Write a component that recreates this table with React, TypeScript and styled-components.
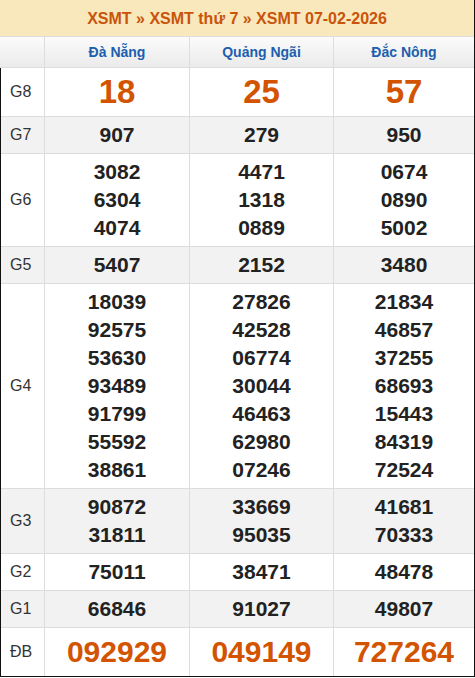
import styled, { createGlobalStyle } from 'styled-components';

const GlobalStyle = createGlobalStyle`
  body {
    margin: 0;
    background: #fff;
    font-family: 'Liberation Sans', Arial, sans-serif;
  }
`;

const Board = styled.div`
  width: 475px;
  box-sizing: border-box;
  border-right: 1px solid #111;
  border-bottom: 1px solid #111;
`;

const Title = styled.div`
  height: 36px;
  line-height: 37px;
  text-align: center;
  background: #f8e8bb;
  border-bottom: 1px solid #ddd;
  color: #c9540c;
  font-size: 16px;
  font-weight: 700;
`;

const HeadRow = styled.div`
  display: grid;
  grid-template-columns: 44px 145px 144px 141px;
  height: 30px;
  background: linear-gradient(#fbfbfb, #ebebeb);
  border-bottom: 1px solid #ddd;
`;

const HeadCell = styled.div`
  display: flex;
  align-items: center;
  justify-content: center;
  border-left: 1px solid #ddd;
  color: #1b5fae;
  font-size: 14px;
  font-weight: 700;

  &:first-child {
    border-left: none;
  }
`;

const Body = styled.div`
  border-left: 1px solid #111;
`;

const Row = styled.div<{ $shade: boolean; $last: boolean }>`
  display: grid;
  grid-template-columns: 43px 145px 144px 141px;
  background: ${(p) => (p.$shade ? '#f2f2f2' : '#fff')};
  border-bottom: ${(p) => (p.$last ? 'none' : '1px solid #ddd')};
`;

const Label = styled.div`
  display: flex;
  align-items: center;
  padding-left: 9px;
  color: #333;
  font-size: 16px;
`;

const Cell = styled.div<{ $size: number }>`
  display: flex;
  flex-direction: column;
  align-items: center;
  justify-content: center;
  padding: 4px 0;
  border-left: 1px solid #ddd;
  font-weight: 700;
  color: ${(p) => (p.$size > 21 ? '#d35400' : '#222')};
  font-size: ${(p) => p.$size}px;
  line-height: ${(p) => (p.$size > 21 ? '40px' : '28px')};
`;

const provinces = ['Đà Nẵng', 'Quảng Ngãi', 'Đắc Nông'];

type Prize = { name: string; size: number; cols: string[][] };

const prizes: Prize[] = [
  { name: 'G8', size: 33, cols: [['18'], ['25'], ['57']] },
  { name: 'G7', size: 21, cols: [['907'], ['279'], ['950']] },
  {
    name: 'G6',
    size: 21,
    cols: [
      ['3082', '6304', '4074'],
      ['4471', '1318', '0889'],
      ['0674', '0890', '5002'],
    ],
  },
  { name: 'G5', size: 21, cols: [['5407'], ['2152'], ['3480']] },
  {
    name: 'G4',
    size: 21,
    cols: [
      ['18039', '92575', '53630', '93489', '91799', '55592', '38861'],
      ['27826', '42528', '06774', '30044', '46463', '62980', '07246'],
      ['21834', '46857', '37255', '68693', '15443', '84319', '72524'],
    ],
  },
  {
    name: 'G3',
    size: 21,
    cols: [
      ['90872', '31811'],
      ['33669', '95035'],
      ['41681', '70333'],
    ],
  },
  { name: 'G2', size: 21, cols: [['75011'], ['38471'], ['48478']] },
  { name: 'G1', size: 21, cols: [['66846'], ['91027'], ['49807']] },
  { name: 'ĐB', size: 30, cols: [['092929'], ['049149'], ['727264']] },
];

function App() {
  return (
    <>
      <GlobalStyle />
      <Board>
        <Title>XSMT » XSMT thứ 7 » XSMT 07-02-2026</Title>
        <HeadRow>
          <HeadCell />
          {provinces.map((p) => (
            <HeadCell key={p}>{p}</HeadCell>
          ))}
        </HeadRow>
        <Body>
          {prizes.map((prize, i) => (
            <Row key={prize.name} $shade={i % 2 === 1} $last={i === prizes.length - 1}>
              <Label>{prize.name}</Label>
              {prize.cols.map((nums, j) => (
                <Cell key={j} $size={prize.size}>
                  {nums.map((n, k) => (
                    <span key={k}>{n}</span>
                  ))}
                </Cell>
              ))}
            </Row>
          ))}
        </Body>
      </Board>
    </>
  );
}

export default App;
